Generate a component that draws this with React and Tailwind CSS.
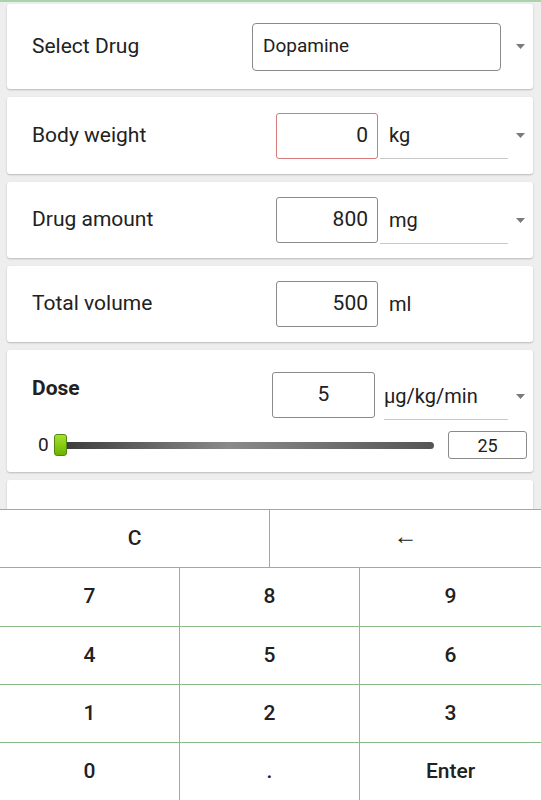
import React from "react";

const font = { fontFamily: "Roboto, 'Noto Sans', sans-serif" };

function Arrow() {
    return (
        <div className="w-[25px] flex justify-center">
            <svg width="9" height="5" viewBox="0 0 9 5">
                <path d="M0 0 L9 0 L4.5 5 Z" fill="#7a7a7a" />
            </svg>
        </div>
    );
}

function Card({ className, children }) {
    return (
        <div className={"bg-white rounded-[3px] shadow-[0_1px_2px_rgba(0,0,0,0.22)] " + className}>
            {children}
        </div>
    );
}

function InputRow({ label, value, unit, error, dropdown, height }) {
    return (
        <Card className={"flex items-center pl-[25px] " + height}>
            <div className="flex-1 text-[21px] text-[#212121]">{label}</div>
            <div
                className={
                    "w-[102px] h-[46px] rounded-[3px] border flex items-center justify-end pr-[9px] text-[21px] text-[#212121] " +
                    (error ? "border-[#d77a7a]" : "border-[#8a8a8a]")
                }
            >
                {value}
            </div>
            <div
                className={
                    "ml-[2px] w-[128px] h-[47px] flex items-center pl-[9px] text-[20px] text-[#212121] " +
                    (dropdown ? "border-b border-[#c8c8c8]" : "")
                }
            >
                {unit}
            </div>
            {dropdown ? <Arrow /> : <div className="w-[25px]" />}
        </Card>
    );
}

function Key({ children, className }) {
    return (
        <div className={"flex items-center justify-center text-[21px] font-medium text-[#212121] " + className}>
            {children}
        </div>
    );
}

export default function App() {
    const line = "border-[#8cb98c]";
    const rows = [["7", "8", "9", "h-[59px]"], ["4", "5", "6", "h-[58px]"], ["1", "2", "3", "h-[58px]"], ["0", ".", "Enter", "flex-1"]];
    return (
        <div style={font} className="w-[541px] h-[800px] bg-[#eeeeee] flex flex-col overflow-hidden">
            <div className="h-[509px] border-t-2 border-[#a9d3a9] pl-[7px] pr-[8px] pt-[2px] flex flex-col gap-2 overflow-hidden">
                <Card className="h-[85px] flex items-center pl-[25px] shrink-0">
                    <div className="flex-1 text-[21px] text-[#212121]">Select Drug</div>
                    <div className="w-[249px] h-[48px] mr-[7px] rounded-[4px] border border-[#8a8a8a] flex items-center pl-[10px] text-[19px] text-[#212121]">
                        Dopamine
                    </div>
                    <Arrow />
                </Card>
                <div className="shrink-0">
                    <InputRow label="Body weight" value="0" unit="kg" error dropdown height="h-[77px]" />
                </div>
                <div className="shrink-0">
                    <InputRow label="Drug amount" value="800" unit="mg" dropdown height="h-[76px]" />
                </div>
                <div className="shrink-0">
                    <InputRow label="Total volume" value="500" unit="ml" height="h-[76px]" />
                </div>
                <Card className="h-[122px] shrink-0 pt-[22px]">
                    <div className="flex items-start pl-[25px]">
                        <div className="flex-1 pt-[1px] text-[21px] font-bold text-[#212121]">Dose</div>
                        <div className="w-[103px] h-[46px] rounded-[3px] border border-[#8a8a8a] flex items-center justify-center text-[21px] text-[#212121]">
                            5
                        </div>
                        <div className="ml-[9px] w-[124px] h-[48px] border-b border-[#c8c8c8] flex items-center text-[20px] text-[#212121]">
                            µg/kg/min
                        </div>
                        <div className="h-[48px] flex items-center">
                            <Arrow />
                        </div>
                    </div>
                    <div className="flex items-center mt-[11px] pl-[31px]">
                        <div className="w-[16px] text-[19px] text-[#212121]">0</div>
                        <div className="relative w-[380px] h-[22px] flex items-center">
                            <div className="ml-[6px] w-[374px] h-[7px] rounded-full bg-[linear-gradient(90deg,#3a3a3a,#8a8a8a_45%,#555555)]" />
                            <div className="absolute left-0 top-0 w-[13px] h-[22px] rounded-[3px] border border-[#4f8a10] bg-[linear-gradient(180deg,#a6e22a,#6bb300)]" />
                        </div>
                        <div className="ml-[14px] w-[79px] h-[28px] rounded-[3px] border border-[#8a8a8a] flex items-center justify-center text-[18px] text-[#212121]">
                            25
                        </div>
                    </div>
                </Card>
                <Card className="h-[60px] shrink-0" />
            </div>
            <div className={"flex-1 bg-white border-t " + line + " flex flex-col"}>
                <div className={"h-[58px] flex border-b " + line}>
                    <Key className={"w-[270px] border-r " + line}>C</Key>
                    <Key className="flex-1 font-normal text-[24px] pb-[5px]">←</Key>
                </div>
                {rows.map((row, i) => (
                    <div key={i} className={"flex " + row[3] + " " + (i < 3 ? "border-b " + line : "")}>
                        <Key className={"w-[180px] border-r " + line}>{row[0]}</Key>
                        <Key className={"w-[180px] border-r " + line}>{row[1]}</Key>
                        <Key className="flex-1">{row[2]}</Key>
                    </div>
                ))}
            </div>
        </div>
    );
}
